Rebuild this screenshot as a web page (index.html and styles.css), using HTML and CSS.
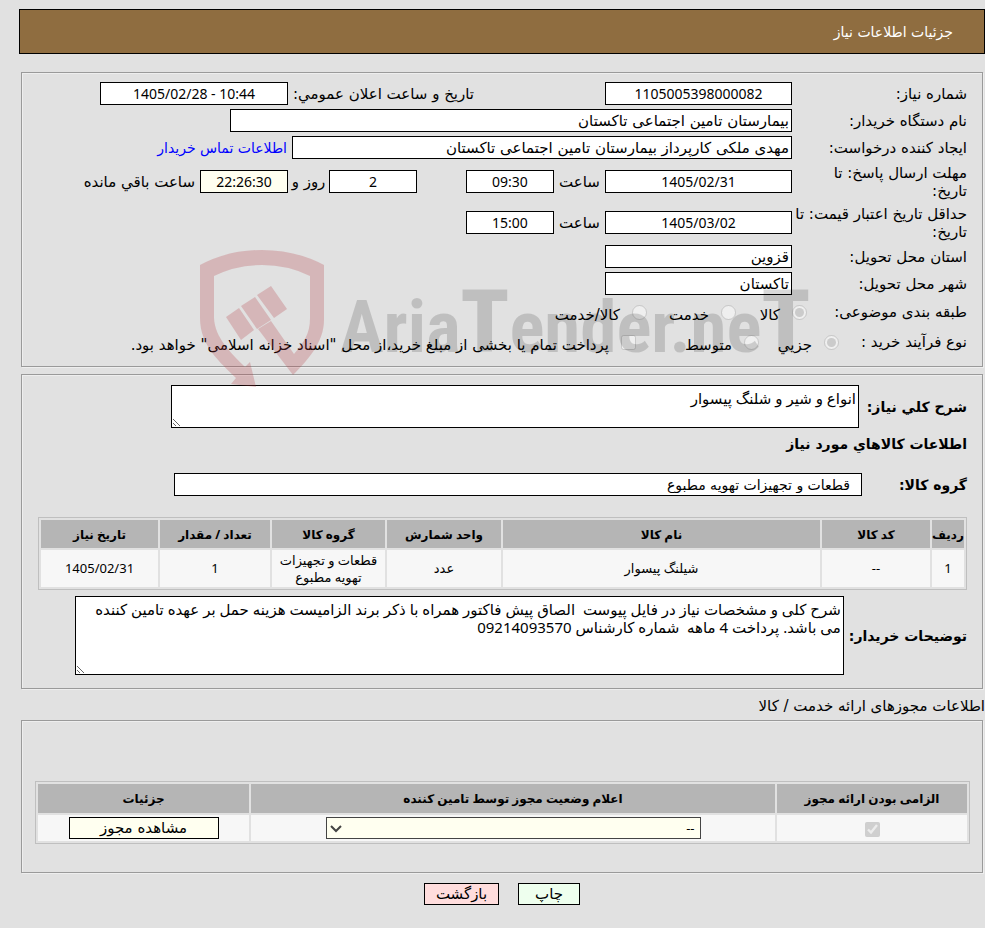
FILE: index.html
```html
<!DOCTYPE html>
<html lang="fa" dir="rtl">
<head>
<meta charset="utf-8">
<title>جزئیات اطلاعات نیاز</title>
<link rel="stylesheet" href="styles.css">
</head>
<body>
<main class="page">
  <header class="title-bar"><h1>جزئیات اطلاعات نیاز</h1></header>

  <fieldset class="panel request">
    <div class="row">
      <label class="name" for="num">شماره نیاز:</label>
      <input class="box main" id="num" value="1105005398000082" readonly>
      <label class="announce" for="pub">تاریخ و ساعت اعلان عمومي:</label>
      <input class="box stamp" id="pub" dir="ltr" value="1405/02/28 - 10:44" readonly>
    </div>
    <div class="row">
      <label class="name" for="org">نام دستگاه خریدار:</label>
      <input class="box text org" id="org" value="بیمارستان تامین اجتماعی تاکستان" readonly>
    </div>
    <div class="row">
      <label class="name" for="creator">ایجاد کننده درخواست:</label>
      <input class="box text creator" id="creator" value="مهدی ملکی کارپرداز بیمارستان تامین اجتماعی تاکستان" readonly>
      <a class="contact" href="#contact">اطلاعات تماس خریدار</a>
    </div>
    <div class="row tall">
      <label class="name" for="due">مهلت ارسال پاسخ: تا<br>تاریخ:</label>
      <input class="box main" id="due" value="1405/02/31" readonly>
      <label class="hour" for="due-time">ساعت</label>
      <input class="box small" id="due-time" value="09:30" readonly>
      <input class="box small days" id="days" value="2" readonly>
      <label class="day-text" for="days">روز و</label>
      <input class="box small clock" id="left" value="22:26:30" readonly>
      <label class="remain" for="left">ساعت باقي مانده</label>
    </div>
    <div class="row tall">
      <label class="name" for="valid">حداقل تاریخ اعتبار قیمت: تا<br>تاریخ:</label>
      <input class="box main" id="valid" value="1405/03/02" readonly>
      <label class="hour" for="valid-time">ساعت</label>
      <input class="box small" id="valid-time" value="15:00" readonly>
    </div>
    <div class="row">
      <label class="name" for="province">استان محل تحویل:</label>
      <input class="box text main" id="province" value="قزوین" readonly>
    </div>
    <div class="row">
      <label class="name" for="city">شهر محل تحویل:</label>
      <input class="box text main" id="city" value="تاکستان" readonly>
    </div>
    <div class="row choices">
      <span class="name category">طبقه بندی موضوعی:</span>
      <label class="opt goods"><input type="radio" name="cat" checked disabled><span>کالا</span></label>
      <label class="opt service"><input type="radio" name="cat" disabled><span>خدمت</span></label>
      <label class="opt"><input type="radio" name="cat" disabled><span>کالا/خدمت</span></label>
    </div>
    <div class="row choices">
      <span class="name process">نوع فرآیند خرید :</span>
      <label class="opt minor"><input type="radio" name="proc" checked disabled><span>جزيي</span></label>
      <label class="opt medium"><input type="radio" name="proc" disabled><span>متوسط</span></label>
      <label class="opt"><input type="checkbox" disabled><span>پرداخت تمام یا بخشی از مبلغ خرید،از محل "اسناد خزانه اسلامی" خواهد بود.</span></label>
    </div>
    <div class="watermark" dir="ltr" aria-hidden="true">
      <svg class="shield" width="125" height="138" viewBox="0 0 125 138">
        <path d="M0 15Q28 0 62 0T124 15V70C124 92 108 110 93 125L58 79L71 71L94 104C104 92 110 84 110 68V26Q88 15 62 15T14 26V68C15 88 31 103 45 117L50 112L56 137L31 134L36 128C20 112 0 96 0 68Z"/>
        <path d="M26 67L39 58L54 80L41 90ZM41 56L55 47L71 70L57 79ZM57 45L71 36L87 59L74 68Z"/>
      </svg>
      <span class="wordmark">Aria<b>T</b>ender.ne<b>T</b></span>
    </div>
  </fieldset>

  <fieldset class="panel goods-panel">
    <div class="area-row">
      <label class="strong desc-label" for="desc">شرح کلي نیاز:</label>
      <textarea class="box desc" id="desc" readonly>انواع و شیر و شلنگ پیسوار</textarea>
    </div>
    <h2 class="strong">اطلاعات کالاهاي مورد نیاز</h2>
    <div class="group-row">
      <label class="strong" for="group">گروه کالا:</label>
      <input class="box text group" id="group" value="قطعات و تجهیزات تهویه مطبوع" readonly>
    </div>
    <table class="grid items">
      <colgroup><col class="c-row"><col class="c-code"><col><col class="c-unit"><col class="c-group"><col class="c-qty"><col class="c-date"></colgroup>
      <thead><tr><th>ردیف</th><th>کد کالا</th><th>نام کالا</th><th>واحد شمارش</th><th>گروه کالا</th><th>تعداد / مقدار</th><th>تاریخ نیاز</th></tr></thead>
      <tbody><tr><td>1</td><td>--</td><td>شیلنگ پیسوار</td><td>عدد</td><td>قطعات و تجهیزات تهویه مطبوع</td><td>1</td><td>1405/02/31</td></tr></tbody>
    </table>
    <div class="area-row">
      <label class="strong" for="notes">توضیحات خریدار:</label>
      <textarea class="box notes" id="notes" readonly>شرح کلی و مشخصات نیاز در فایل پیوست  الصاق پیش فاکتور همراه با ذکر برند الزامیست هزینه حمل بر عهده تامین کننده می باشد. پرداخت 4 ماهه  شماره کارشناس 09214093570</textarea>
    </div>
  </fieldset>

  <p class="caption">اطلاعات مجوزهای ارائه خدمت / کالا</p>

  <fieldset class="panel permits-panel">
    <table class="grid permits">
      <colgroup><col class="c-must"><col><col class="c-detail"></colgroup>
      <thead><tr><th>الزامی بودن ارائه مجوز</th><th>اعلام وضعیت مجوز توسط تامین کننده</th><th>جزئیات</th></tr></thead>
      <tbody><tr>
        <td><input type="checkbox" aria-label="الزامی بودن ارائه مجوز" checked disabled></td>
        <td><span class="select-wrap"><select aria-label="اعلام وضعیت مجوز"><option>--</option></select><svg width="12" height="8" viewBox="0 0 12 8"><path d="M1 1L6 6L11 1"/></svg></span></td>
        <td><button class="btn view" type="button">مشاهده مجوز</button></td>
      </tr></tbody>
    </table>
  </fieldset>

  <div class="actions">
    <button class="btn print" type="button">چاپ</button>
    <button class="btn back" type="button">بازگشت</button>
  </div>
</main>
</body>
</html>
```
FILE: styles.css
```css
* { box-sizing: border-box; }

body {
  margin: 0;
  background: #e1e1e1;
  color: #000;
  font: 15px/18px "DejaVu Sans", sans-serif;
}

input, textarea, select, button { font: inherit; color: inherit; margin: 0; }

.page { padding: 9px 0 23px; margin-left: 19px; }

.title-bar {
  display: flex;
  align-items: center;
  height: 45px;
  padding: 0 31px;
  border: 1px solid #000;
  background: #8f6d40;
  color: #fff;
}

.title-bar h1 { margin: 0; font-size: 14px; font-weight: normal; }

.panel {
  min-width: 0;
  margin: 0 2px;
  padding: 0 15px;
  border: 1px solid #9a9a9a;
  box-shadow: inset 1px 1px #eee, 1px 1px #eee;
}

.request { position: relative; margin-top: 18px; padding-top: 7px; padding-bottom: 9px; }

.row { display: flex; align-items: center; height: 27px; white-space: nowrap; }
.row.tall { height: 41px; }
.row.choices { height: 30px; }

.name { flex: 0 0 175px; }

.box {
  height: 23px;
  padding: 0 2px;
  border: 1px solid #000;
  border-radius: 0;
  background: #fff;
  font: 14px/18px "Noto Sans", "DejaVu Sans", sans-serif;
  text-align: center;
  outline: 0;
}
.box.text { font: 15px/18px "DejaVu Sans", sans-serif; text-align: right; }
.main { width: 187px; }
.stamp { width: 188px; }
.org { width: 562px; }
.creator { width: 500px; }
.small { width: 88px; }
.days { margin-right: 49px; }
.clock { background: #fffff0; }

.announce { flex: 0 0 317px; padding-left: 5px; text-align: left; }
.hour { flex: 0 0 51px; text-align: center; }
.day-text { flex: 0 0 41px; text-align: center; }
.remain { padding-right: 5px; }
.contact { padding-right: 5px; color: #00f; font-size: 14px; text-decoration: none; }

.category { flex-basis: 160px; }
.process { flex-basis: 128px; }
.opt { display: flex; align-items: center; gap: 12px; }
.opt span { padding-top: 5px; }
input[type="radio"], input[type="checkbox"] { width: 15px; height: 15px; }
.goods { flex: 0 0 71px; }
.service { flex: 0 0 89px; }
.minor { flex: 0 0 80px; }
.medium { flex: 0 0 123px; }

.watermark {
  position: absolute;
  top: 177px;
  left: 178px;
  display: flex;
  gap: 15px;
  pointer-events: none;
}
.shield { fill: rgba(181, 57, 65, .25); }
.wordmark {
  height: 138px;
  color: rgba(0, 0, 0, .15);
  font: bold 73px/154px "Roboto Condensed", "Open Sans Condensed", "Liberation Sans", sans-serif;
}
.wordmark b { font-size: 88px; line-height: 1px; }

.goods-panel { margin-top: 7px; padding: 10px 15px 13px 16px; }
.strong { font-size: 14px; font-weight: bold; }
.area-row { display: flex; align-items: center; gap: 5px; }
.area-row .strong { flex: none; }
.desc-label { width: 103px; }
textarea.box {
  flex: 1;
  display: block;
  padding: 3px 2px;
  font-size: 15px;
  text-align: right;
  resize: both;
  overflow: hidden;
}
.desc { height: 43px; margin-left: 133px; }
.notes { height: 79px; margin-left: 37px; }
h2.strong { margin: 7px 0 20px; line-height: 18px; }
.group-row { display: flex; align-items: center; }
.group-row .strong { flex: 0 0 105px; }
.group { flex: 1; margin-left: 136px; }
.box.group { padding: 0 11px; font-size: 14px; }

.grid {
  width: 100%;
  table-layout: fixed;
  border: 1px solid #bfbfbf;
  border-spacing: 2px;
  font: 13px/17px "Noto Sans", "DejaVu Sans", sans-serif;
  text-align: center;
}
.grid th { height: 28px; padding: 0; background: #b5b5b5; font-size: 12px; white-space: nowrap; }
.grid td { padding: 0; background: #f7f7f7; }
.items { margin: 21px 0 6px; }
.items td { height: 37px; padding: 0 4px; }
.c-row { width: 32px; }
.c-code { width: 108px; }
.c-unit { width: 114px; }
.c-group { width: 113px; }
.c-qty { width: 110px; }
.c-date { width: 117px; }

.caption { margin: 8px 0 5px; }

.permits-panel { padding: 60px 12px 28px 13px; }
.permits th { height: 29px; }
.permits td { height: 26px; }
.permits td > * { vertical-align: middle; }
.c-must { width: 190px; }
.c-detail { width: 211px; }

.select-wrap { position: relative; display: inline-block; width: 375px; height: 22px; }
.select-wrap select {
  display: block;
  width: 100%;
  height: 22px;
  padding: 0 5px;
  border: 1px solid #444;
  border-radius: 0;
  background: #fffff0;
  appearance: none;
}
.select-wrap svg {
  position: absolute;
  left: 4px;
  top: 8px;
  fill: none;
  stroke: #444;
  stroke-width: 2;
  pointer-events: none;
}

.btn {
  height: 22px;
  padding: 0;
  border: 1px solid #000;
  border-radius: 0;
  font: 15px/20px "DejaVu Sans", sans-serif;
}
.view { width: 150px; background: #fffff0; }
.actions { display: flex; justify-content: center; gap: 19px; margin-top: 10px; }
.print { width: 62px; background: #efe; }
.back { width: 75px; background: #fdd; }
```
